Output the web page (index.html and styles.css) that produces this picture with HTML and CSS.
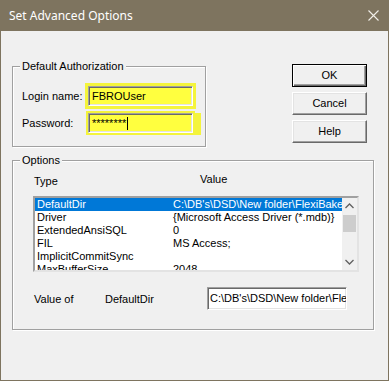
FILE: index.html
```html
<!DOCTYPE html>
<html lang="en">
	<head>
		<meta charset="UTF-8">
		<title>Set Advanced Options</title>
		<link rel="stylesheet" href="styles.css">
	</head>
	<body>
		<div class="window">
			<div class="titlebar">
				<span class="title">Set Advanced Options</span>
				<svg class="close" width="11" height="11" viewBox="0 0 11 11">
					<path d="M0.5 0.5L10.5 10.5M10.5 0.5L0.5 10.5" stroke="#f2efe9" stroke-width="1.1" fill="none"/>
				</svg>
			</div>
			<div class="client">
				<div class="top-row">
					<div class="group auth">
						<span class="caption">Default Authorization</span>
						<div class="field-row">
							<span class="label">Login name:</span>
							<div class="edit hl">FBROUser</div>
						</div>
						<div class="field-row">
							<span class="label">Password:</span>
							<div class="edit hl hl-wide">********<span class="caret"></span></div>
						</div>
					</div>
					<div class="buttons">
						<div class="btn btn-default">OK</div>
						<div class="btn">Cancel</div>
						<div class="btn">Help</div>
					</div>
				</div>
				<div class="group options">
					<span class="caption">Options</span>
					<div class="col-heads">
						<span class="head-type">Type</span>
						<span class="head-value">Value</span>
					</div>
					<div class="listbox">
						<div class="rows">
							<div class="row selected"><span class="c-type">DefaultDir</span><span class="c-value">C:\DB's\DSD\New folder\FlexiBake</span></div>
							<div class="row"><span class="c-type">Driver</span><span class="c-value">{Microsoft Access Driver (*.mdb)}</span></div>
							<div class="row"><span class="c-type">ExtendedAnsiSQL</span><span class="c-value">0</span></div>
							<div class="row"><span class="c-type">FIL</span><span class="c-value">MS Access;</span></div>
							<div class="row"><span class="c-type">ImplicitCommitSync</span><span class="c-value"></span></div>
							<div class="row"><span class="c-type">MaxBufferSize</span><span class="c-value">2048</span></div>
						</div>
						<div class="vscroll">
							<div class="arrow">
								<svg width="9" height="6" viewBox="0 0 9 6"><path d="M0.5 5L4.5 1L8.5 5" stroke="#606060" stroke-width="1.3" fill="none"/></svg>
							</div>
							<div class="thumb"></div>
							<div class="track"></div>
							<div class="arrow">
								<svg width="9" height="6" viewBox="0 0 9 6"><path d="M0.5 1L4.5 5L8.5 1" stroke="#606060" stroke-width="1.3" fill="none"/></svg>
							</div>
						</div>
					</div>
					<div class="value-row">
						<span class="v-label">Value of</span>
						<span class="v-name">DefaultDir</span>
						<div class="edit v-edit">C:\DB's\DSD\New folder\FlexiBake</div>
					</div>
				</div>
			</div>
		</div>
	</body>
</html>
```

FILE: styles.css
```css
* {
	box-sizing: border-box;
}
body {
	margin: 0;
	font-family: "Liberation Sans", Arial, sans-serif;
	font-size: 11px;
	color: #000;
}
.window {
	width: 389px;
	height: 381px;
	background: #f0f0f0;
	border: 1px solid #7e745f;
	border-top: 0;
}
.titlebar {
	height: 31px;
	margin: 0 -1px;
	background: #7e745f;
	display: flex;
	align-items: center;
	justify-content: space-between;
	padding: 0 10px 0 9px;
}
.title {
	color: #fff;
	font-family: "Noto Sans", "Open Sans", sans-serif;
	font-size: 12px;
	line-height: 16px;
}
.close {
	display: block;
}
.client {
	padding: 33px 0 0 11px;
}
.top-row {
	display: flex;
	align-items: flex-start;
}

/* group boxes */
.group {
	position: relative;
	border: 1px solid #a0a0a0;
	box-shadow: inset 1px 1px #fff, 1px 1px #fff;
}
.caption {
	position: absolute;
	top: -7px;
	left: 7px;
	padding: 0 2px;
	line-height: 13px;
	background: #f0f0f0;
}
.auth {
	width: 194px;
	height: 81px;
	margin-top: 2px;
	padding: 19px 0 0 9px;
	display: flex;
	flex-direction: column;
	gap: 7px;
}
.field-row {
	display: flex;
	align-items: center;
}
.label {
	width: 66px;
}

/* edits */
.edit {
	height: 20px;
	border: 1px solid;
	border-color: #a0a0a0 #fff #fff #a0a0a0;
	box-shadow: inset 1px 1px #696969, inset -1px -1px #e3e3e3;
	background: #fff;
	padding: 0 3px;
	line-height: 18px;
	white-space: nowrap;
	overflow: hidden;
}
.hl {
	width: 105px;
	background: #ffff3f;
	box-shadow: inset 1px 1px #696969, inset -1px -1px #e3e3e3, 0 0 0 3px #f4f43c;
	display: flex;
	align-items: center;
}
.hl-wide {
	box-shadow: inset 1px 1px #696969, inset -1px -1px #e3e3e3, 0 0 0 2px #f4f43c, 7px 1px 0 1px #f4f43c;
}
.caret {
	display: inline-block;
	width: 1px;
	height: 13px;
	margin-left: 1px;
	background: #000;
}

/* buttons */
.buttons {
	margin-left: 86px;
	display: flex;
	flex-direction: column;
	gap: 5px;
}
.btn {
	width: 75px;
	height: 23px;
	text-align: center;
	line-height: 21px;
	background: #f0f0f0;
	border: 1px solid;
	border-color: #fff #696969 #696969 #fff;
	box-shadow: inset -1px -1px #a0a0a0, inset 1px 1px #e3e3e3;
}
.btn-default {
	border: 1px solid #000;
	box-shadow: inset 1px 1px #fff, inset -1px -1px #696969, inset -2px -2px #a0a0a0;
}

/* options */
.options {
	width: 362px;
	height: 170px;
	margin-top: 13px;
	padding: 13px 0 0 20px;
}
.col-heads {
	display: flex;
	align-items: flex-start;
	height: 22px;
	line-height: 13px;
	padding-left: 1px;
}
.head-type {
	width: 166px;
	margin-top: 1px;
}
.head-value {
	margin-top: -1px;
}
.listbox {
	width: 326px;
	height: 76px;
	display: flex;
	border: 2px solid;
	border-color: #a0a0a0 #e3e3e3 #e3e3e3 #a0a0a0;
	background: #fff;
}
.rows {
	flex: 1;
	overflow: hidden;
}
.row {
	display: flex;
	height: 13px;
	line-height: 13px;
	white-space: nowrap;
	overflow: hidden;
}
.row.selected {
	background: #0078d7;
	color: #fff;
}
.c-type {
	width: 138px;
	padding-left: 2px;
	flex-shrink: 0;
}
.vscroll {
	width: 15px;
	background: #f0f0f0;
	display: flex;
	flex-direction: column;
}
.arrow {
	height: 16px;
	display: flex;
	align-items: center;
	justify-content: center;
}
.thumb {
	height: 17px;
	margin: 1px 1px 0;
	background: #cdcdcd;
}
.track {
	flex: 1;
}
.value-row {
	display: flex;
	align-items: center;
	margin-top: 15px;
	padding-left: 1px;
}
.v-label {
	width: 71px;
}
.v-name {
	width: 102px;
}
.v-edit {
	width: 140px;
	height: 23px;
	line-height: 20px;
	padding: 0 2px;
}
```
